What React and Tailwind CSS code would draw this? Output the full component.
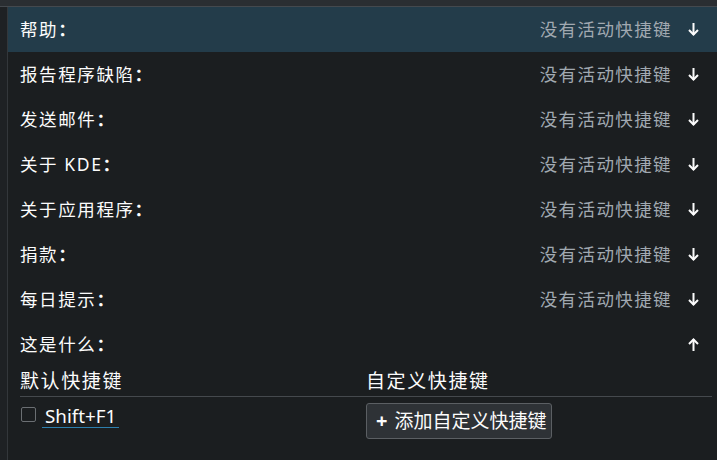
import React from "react";

const FONT = { fontFamily: '"Noto Sans", "Noto Sans CJK SC", sans-serif' };

function Arrow({ up }) {
  return (
    <svg width="13" height="13" viewBox="0 0 13 13" className="shrink-0">
      <g stroke="#fcfcfc" strokeWidth="2" fill="none" strokeLinecap="square" transform={up ? "rotate(180 6.5 6.5)" : undefined}>
        <line x1="6.5" y1="1" x2="6.5" y2="11" />
        <polyline points="2,7 6.5,11.5 11,7" strokeLinecap="butt" strokeLinejoin="miter" />
      </g>
    </svg>
  );
}

function Label({ text }) {
  return (
    <span className="flex-1 tracking-[1.6px]">
      {text}
      <span className="font-bold">：</span>
    </span>
  );
}

const rows = ["帮助", "报告程序缺陷", "发送邮件", "关于 KDE", "关于应用程序", "捐款", "每日提示"];

export default function App() {
  return (
    <div className="w-[717px] h-[460px] bg-[#1b1e20] overflow-hidden flex flex-col text-[#fcfcfc]" style={FONT}>
      <div className="h-[7px] bg-[#2a2e32] border-b border-[#44494e] shrink-0" />
      <div className="flex flex-1 min-h-0">
        <div className="w-[8px] shrink-0 bg-[#1e2124] border-r border-[#33373b]" />
        <div className="flex-1 flex flex-col">
          {rows.map((r, i) => (
            <div
              key={i}
              className={`h-[45px] flex items-center pl-[12px] pr-[17px] text-[17.5px] ${i === 0 ? "bg-[#233c4a]" : ""}`}
            >
              <Label text={r} />
              <span className="text-[#a1a9b1] mr-[15px] tracking-[1.4px]">没有活动快捷键</span>
              <Arrow />
            </div>
          ))}
          <div className="h-[45px] flex items-center pl-[12px] pr-[17px] text-[17.5px]">
            <Label text="这是什么" />
            <Arrow up />
          </div>
          <div className="ml-[12px] mr-[5px] flex flex-col">
            <div className="grid grid-cols-2 h-[30px] items-center border-b border-[#45494d] text-[19px] tracking-[1.6px] leading-none pb-[1px]">
              <span>默认快捷键</span>
              <span>自定义快捷键</span>
            </div>
            <div className="grid grid-cols-2 pt-[6px]">
              <div className="flex items-start pt-[3px]">
                <div className="w-[15px] h-[15px] mt-[1px] ml-[1px] border border-[#6b6f73] rounded-[2px]" />
                <span className="ml-[6px] px-[3px] text-[18.8px] leading-[20px] pb-[1px] border-b border-[#2d7fae]">Shift+F1</span>
              </div>
              <div>
                <button className="h-[36px] w-[186px] pl-[9px] bg-[#2e3236] border border-[#5b5f63] rounded-[3px] text-[19px] flex items-center text-[#fcfcfc] tracking-[0px] whitespace-nowrap">
                  <span className="text-[20px] font-bold mr-[7px] leading-none">+</span>
                  添加自定义快捷键
                </button>
              </div>
            </div>
          </div>
        </div>
      </div>
    </div>
  );
}
